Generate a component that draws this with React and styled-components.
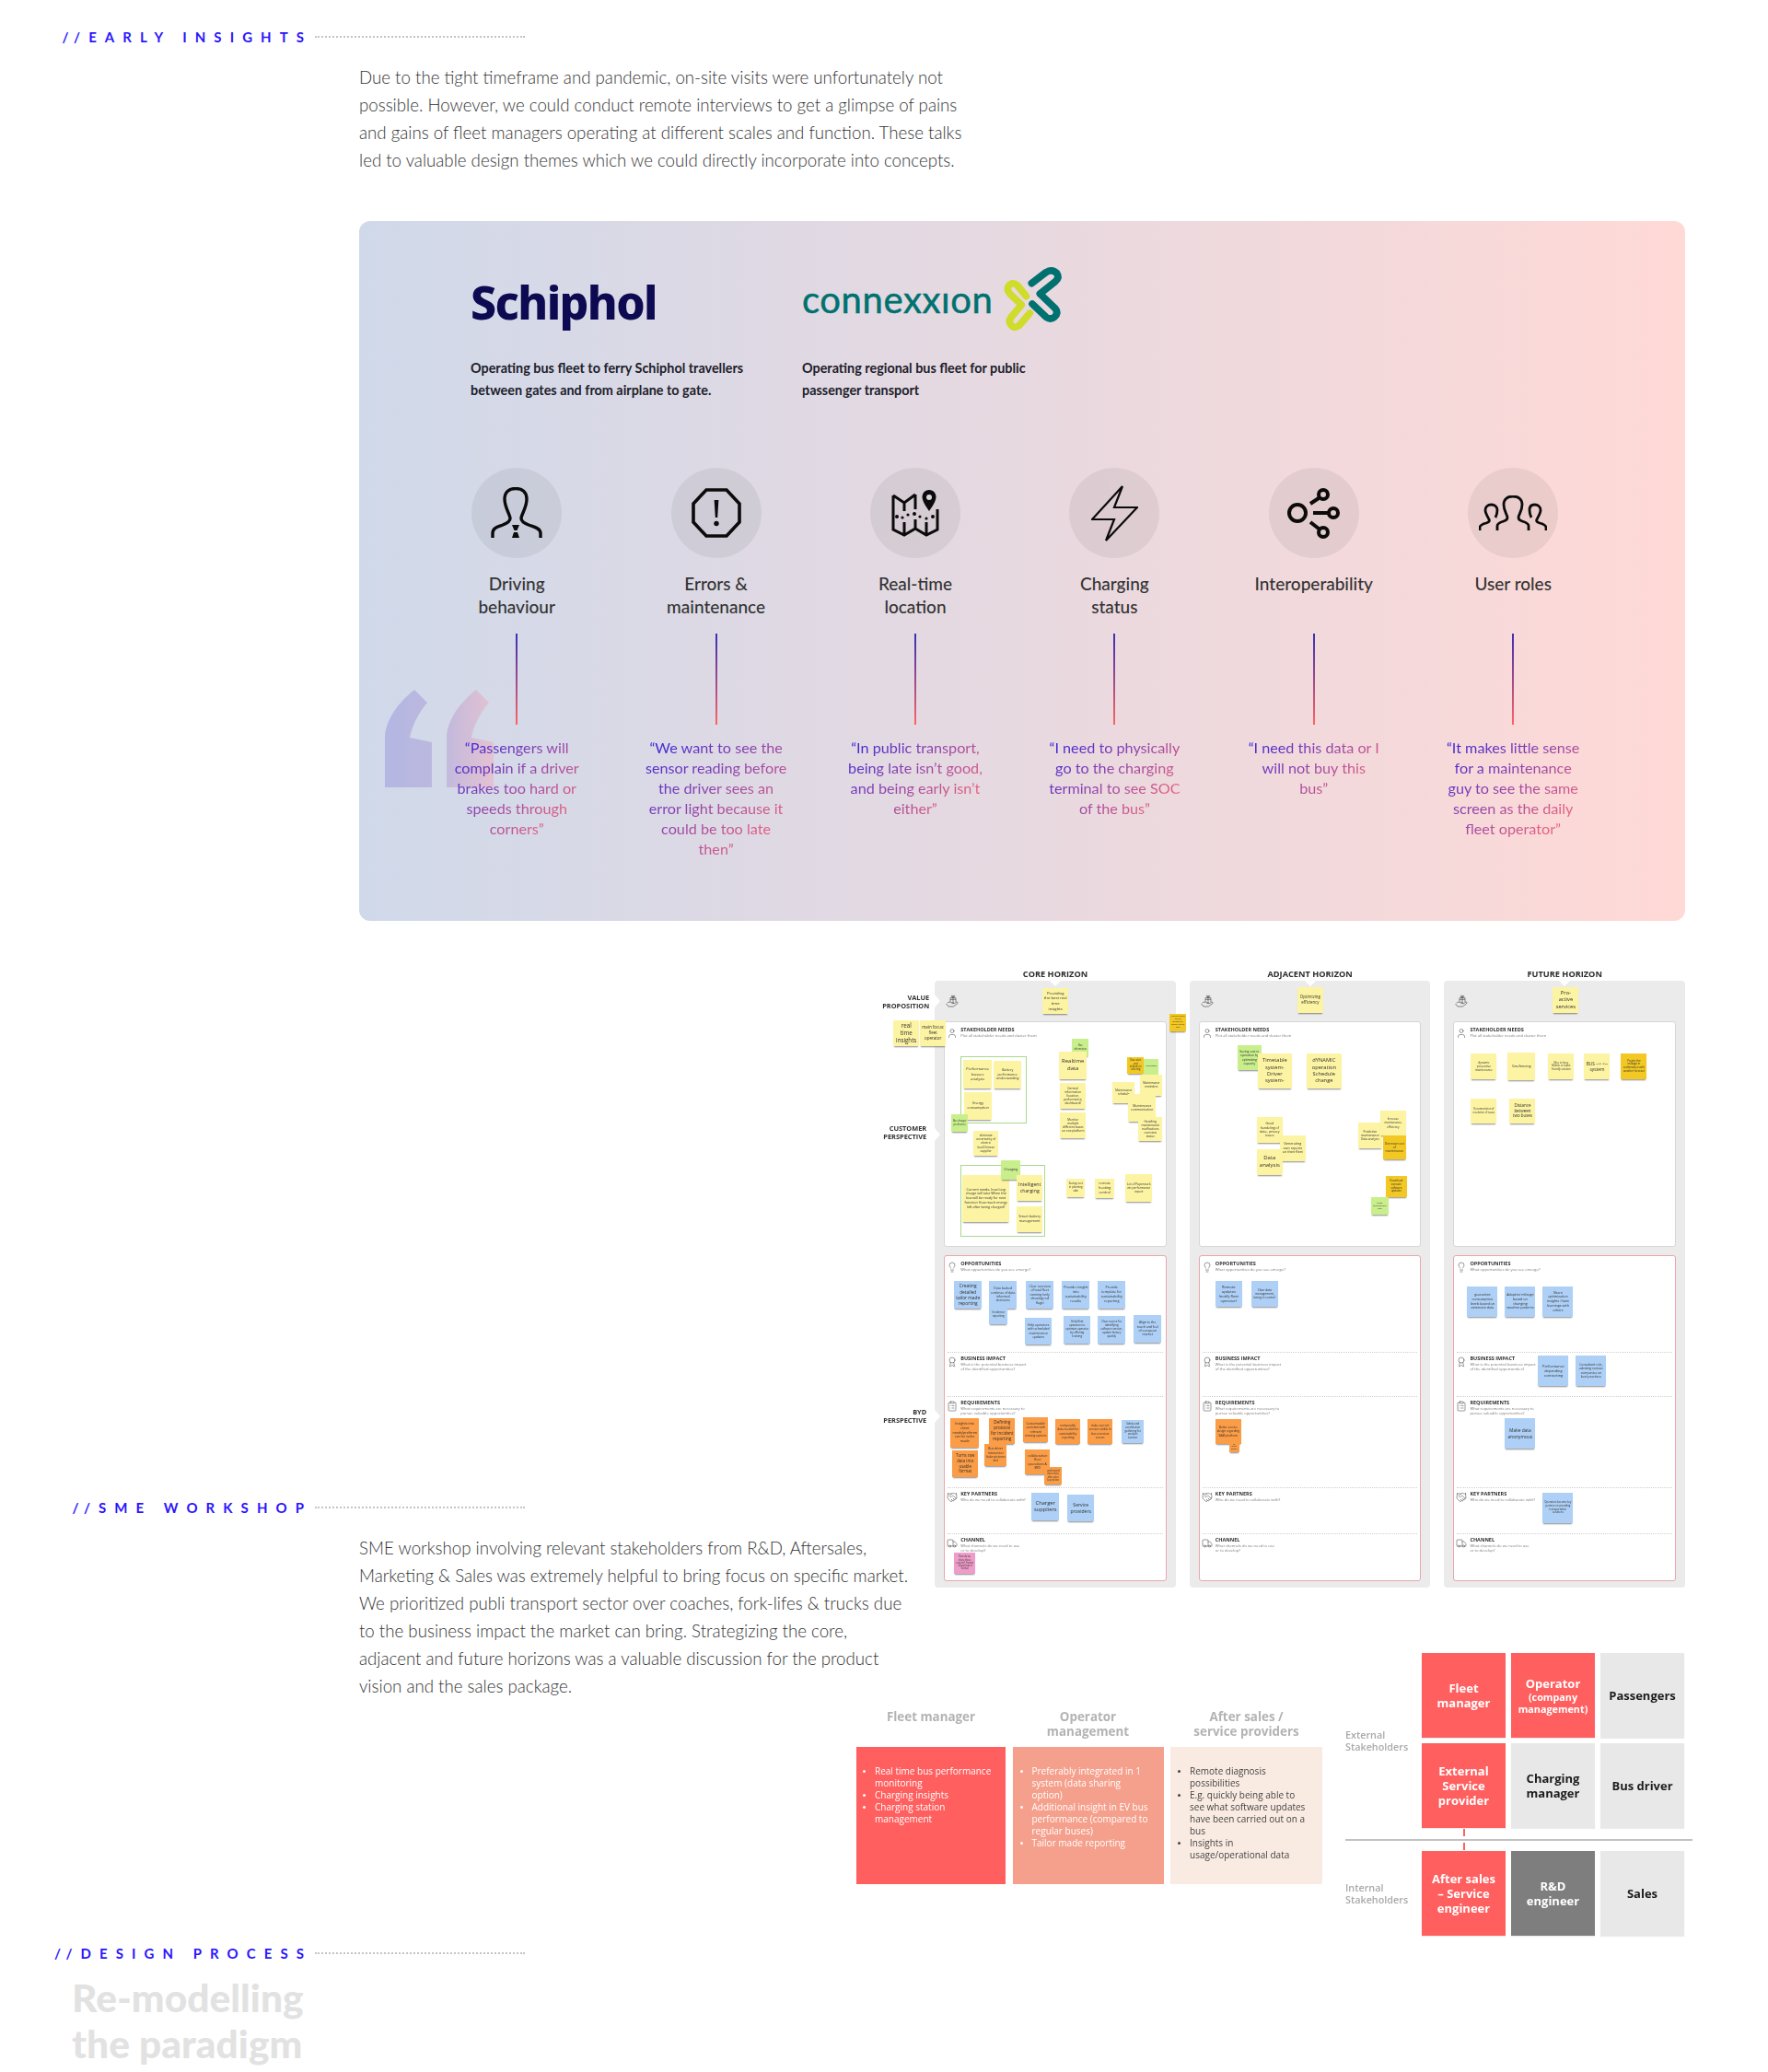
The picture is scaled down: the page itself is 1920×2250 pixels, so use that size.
import React from 'react'
import styled, { createGlobalStyle } from 'styled-components'
import { User, Lightbulb, Award, ClipboardList, Handshake, Truck } from 'lucide-react'

const GlobalStyle = createGlobalStyle`
  html, body { margin: 0; padding: 0; background: #fff; }
  body { font-family: "Lato", "Open Sans", sans-serif; }
`

const Page = styled.div`
  width: 1920px;
  height: 2250px;
  padding-top: 30px;
  box-sizing: border-box;
  overflow: hidden;
`

const SectionHead = styled.div`
  display: flex;
  align-items: center;
  height: 20px;
`
const SectionLabel = styled.div`
  width: 339px;
  text-align: right;
  font-size: 15px;
  font-weight: 700;
  letter-spacing: 9.05px;
  color: #2b14ff;
  white-space: nowrap;
`
const Dots = styled.div`
  width: 228px;
  margin-left: 3px;
  border-top: 2px dotted #c4c4c4;
`

const Paragraph = styled.p`
  margin: 19px 0 0 390px;
  width: 640px;
  font-size: 18.7px;
  font-weight: 300;
  line-height: 30px;
  color: #333;
  white-space: nowrap;
`

const Panel = styled.section`
  position: relative;
  margin: 51px 0 0 390px;
  width: 1440px;
  height: 760px;
  box-sizing: border-box;
  padding: 50px 0 0 63px;
  border-radius: 12px;
  background: linear-gradient(90deg, #d0d9ea 0%, #ffd9d6 100%);
`
const BigQuote = styled.div`
  position: absolute;
  left: 28px;
  top: 509px;
`
const Companies = styled.div`
  display: grid;
  grid-template-columns: 360px 360px;
  margin-left: 58px;
`
const Company = styled.div`
  display: flex;
  flex-direction: column;
`
const LogoRow = styled.div`
  display: flex;
  align-items: center;
  height: 70px;
  gap: 3px;
`
const SchipholLogo = styled.div`
  padding-top: 7px;
  font-family: "Noto Sans", sans-serif;
  font-size: 50px;
  font-weight: 800;
  letter-spacing: -1.6px;
  line-height: 63px;
  color: #0d0a52;
`
const ConnexxionLogo = styled.div`
  font-size: 40px;
  font-weight: 400;
  letter-spacing: 0.6px;
  line-height: 70px;
  color: #00716f;
  -webkit-text-stroke: 0.5px #00716f;
`
const CompanyText = styled.p`
  margin: 28px 0 0;
  font-size: 14.4px;
  font-weight: 700;
  line-height: 24px;
  color: #20202a;
  white-space: nowrap;
`
const Insights = styled.div`
  position: relative;
  display: grid;
  grid-template-columns: repeat(6, 216.4px);
  margin-top: 72px;
`
const Insight = styled.div`
  display: flex;
  flex-direction: column;
  align-items: center;
`
const Circle = styled.div`
  display: flex;
  align-items: center;
  justify-content: center;
  width: 98px;
  height: 98px;
  border-radius: 50%;
  background: rgba(0, 0, 0, 0.06);
  svg { display: block; }
`
const InsightTitle = styled.div`
  height: 50px;
  margin-top: 15px;
  font-size: 19px;
  font-weight: 500;
  line-height: 25px;
  color: #333;
  text-align: center;
  white-space: nowrap;
`
const Stem = styled.div`
  width: 2px;
  height: 99px;
  margin-top: 17px;
  background: linear-gradient(180deg, #3a2fb4 0%, #ff6464 100%);
`
const Quote = styled.div`
  margin-top: 14px;
  font-size: 16.2px;
  font-weight: 400;
  line-height: 22px;
  text-align: center;
  white-space: nowrap;
  color: transparent;
  background: linear-gradient(140deg, #3a26d8 5%, #ff6a72 95%);
  -webkit-background-clip: text;
  background-clip: text;
`

const Stage = styled.div`
  display: grid;
  width: 1838px;
  height: 1052px;
  margin-top: 50px;
  & > * { grid-area: 1 / 1; }
`
const TextBlock = styled.div`
  padding-top: 577px;
`
const BoardArea = styled.div`
  display: flex;
  justify-self: end;
  align-self: start;
  margin-right: 8px;
  filter: blur(0.35px);
`
const SideLabels = styled.div`
  display: flex;
  flex-direction: column;
  align-items: flex-end;
  width: 60px;
`
const SideLabel = styled.div`
  margin-top: ${p => p.$top}px;
  padding-right: ${p => p.$pad}px;
  font-family: "Open Sans", sans-serif;
  font-size: 7.4px;
  font-weight: 700;
  line-height: 9px;
  color: #333;
  text-align: right;
  white-space: nowrap;
`
const BoardColumns = styled.div`
  display: grid;
  grid-template-columns: repeat(3, 261.6px);
  column-gap: 15px;
`
const BoardColumn = styled.div`
  display: flex;
  flex-direction: column;
`
const BoardTitle = styled.div`
  height: 15px;
  font-family: "Open Sans", sans-serif;
  font-size: 9.2px;
  font-weight: 700;
  line-height: 15px;
  color: #2c2c2c;
  text-align: center;
`
const Board = styled.div`
  position: relative;
  height: 659px;
  box-sizing: border-box;
  padding: 0 10px;
  border-radius: 4px;
  background: #ebebeb;
  &::before {
    content: "";
    position: absolute;
    top: 0;
    left: 125px;
    border-left: 6px solid transparent;
    border-right: 6px solid transparent;
    border-top: 6px solid #fff;
  }
`
const LeftNotch = styled.div`
  position: absolute;
  left: 0;
  top: ${p => p.$y}px;
  border-top: 7px solid transparent;
  border-bottom: 7px solid transparent;
  border-left: 6px solid #fff;
`
const ValueRow = styled.div`
  display: flex;
  align-items: center;
  height: 44px;
  padding-left: 2px;
  color: #555;
`
const CardPanel = styled.div`
  height: ${p => p.$height}px;
  box-sizing: border-box;
  margin-bottom: 9px;
  padding: 0 3px;
  border: 1px solid ${p => (p.$pink ? '#e8a6ad' : '#d6d6d6')};
  border-radius: 3px;
  background: #fff;
`
const BoardSection = styled.div`
  height: ${p => p.$height}px;
  box-sizing: border-box;
  padding-top: ${p => p.$pad}px;
  border-top: ${p => (p.$first ? 'none' : '1px dotted #cfcfcf')};
`
const SectionRow = styled.div`
  display: flex;
  align-items: flex-start;
  gap: 3px;
  color: #555;
  svg { flex: none; width: 12px; height: 12px; margin: 1px 0 0 -1px; }
`
const SectionCopy = styled.div`
  font-family: "Open Sans", sans-serif;
`
const SectionName = styled.div`
  font-size: 5.5px;
  font-weight: 700;
  line-height: 7px;
  color: #2e2e2e;
  white-space: nowrap;
`
const SectionHint = styled.div`
  font-size: 4.1px;
  line-height: 5.2px;
  color: #777;
  white-space: nowrap;
`

const stickyColors = {
  y: '#fdf4a3',
  d: '#f3c823',
  g: '#c9ef8c',
  b: '#aed0f6',
  o: '#fb9c46',
  p: '#ee9cc8',
}
const Sticky = styled.div`
  position: absolute;
  left: ${p => p.$x}px;
  top: ${p => p.$y}px;
  width: ${p => p.$w}px;
  height: ${p => p.$h}px;
  box-sizing: border-box;
  display: flex;
  align-items: center;
  justify-content: center;
  padding: 1.5px;
  overflow-wrap: anywhere;
  font-family: "Open Sans", sans-serif;
  font-size: ${p => p.$fs}px;
  line-height: 1.3;
  color: #2e2e2e;
  text-align: center;
  background: ${p => stickyColors[p.$kind]};
  box-shadow: 0 2px 1.5px -1px rgba(0, 0, 0, 0.45);
`
const Frame = styled.div`
  position: absolute;
  left: ${p => p.$x}px;
  top: ${p => p.$y}px;
  width: ${p => p.$w}px;
  height: ${p => p.$h}px;
  box-sizing: border-box;
  border: 1px solid #a8d98b;
`

const BottomRow = styled.div`
  display: flex;
  justify-self: end;
  align-self: end;
  gap: 25px;
  filter: blur(0.3px);
`
const Needs = styled.div`
  display: grid;
  grid-template-columns: 162px 164px 165px;
  align-content: start;
  column-gap: 7.5px;
  margin-top: 61px;
  font-family: "Open Sans", sans-serif;
`
const NeedHead = styled.div`
  height: 41px;
  font-size: 13.4px;
  font-weight: 700;
  line-height: 16px;
  color: #b3b3b3;
  text-align: center;
`
const NeedBox = styled.ul`
  grid-row: 2;
  height: 149px;
  margin: 0;
  padding: 20px ${p => p.$right}px 0 ${p => p.$indent}px;
  box-sizing: border-box;
  font-size: 10px;
  font-weight: 500;
  line-height: 13px;
  color: ${p => (p.$dark ? '#444' : '#fff')};
  background: ${p => p.$bg};
  li::marker { font-size: 8px; }
`
const StakeMap = styled.div`
  display: flex;
  flex-direction: column;
  width: 377px;
  font-family: "Open Sans", sans-serif;
`
const StakeGroup = styled.div`
  display: grid;
  grid-template-columns: 77px repeat(3, 91px);
  grid-auto-rows: 92px;
  gap: 6px;
`
const StakeLabel = styled.div`
  grid-row: span ${p => p.$span};
  align-self: center;
  font-size: 10.8px;
  font-weight: 600;
  line-height: 13px;
  color: #a9a9a9;
`
const tones = {
  red: ['#ff5f5f', '#fff'],
  grey: ['#e8e8e8', '#1c1c1c'],
  dark: ['#7e7e7e', '#fff'],
}
const StakeCell = styled.div`
  display: flex;
  flex-direction: column;
  align-items: center;
  justify-content: center;
  font-size: 13px;
  font-weight: 700;
  line-height: 16px;
  text-align: center;
  background: ${p => tones[p.$tone][0]};
  color: ${p => tones[p.$tone][1]};
  box-shadow: 0 1px 1px rgba(0, 0, 0, 0.08);
  small { font-size: 10.8px; line-height: 13px; }
`
const StakeDivider = styled.div`
  position: relative;
  height: 25px;
  &::before {
    content: "";
    position: absolute;
    left: 0;
    right: 0;
    top: 12px;
    height: 2px;
    background: #c2c2c2;
  }
  &::after {
    content: "";
    position: absolute;
    left: 128px;
    top: 1px;
    width: 2px;
    height: 23px;
    background: linear-gradient(180deg, #ff5f5f 0 8px, transparent 8px 15px, #ff5f5f 15px);
  }
`

const ProcessHead = styled(SectionHead)`
  margin-top: 9px;
`
const ProcessTitle = styled.h2`
  margin: 13px 0 0 78px;
  font-size: 42.5px;
  font-weight: 900;
  line-height: 50px;
  color: #e2e2e2;
`

const PersonIcon = () => (
  <svg width="56" height="56" viewBox="0 0 56 56" fill="none" stroke="#0b0b0b" strokeWidth="3.4">
    <path d="M2 55V50C2 44 8 43 13 41C18 39 21 37 21 34C21 30 15 22 15 13C15 5 20 1.5 27 1.5C34 1.5 39 5 39 13C39 22 33 30 33 34C33 37 36 39 41 41C46 43 54 44 54 50V55" />
    <path d="M23 41H31L28.5 47H25.5ZM25 49H29L31 55H23Z" fill="#0b0b0b" stroke="none" />
  </svg>
)
const OctagonIcon = () => (
  <svg width="54" height="54" viewBox="0 0 54 54" fill="none" stroke="#0b0b0b" strokeWidth="3.6">
    <path d="M16 2H38L52 17V37L38 52H16L2 37V17Z" />
    <path d="M24.6 13H29.4L28.2 32H25.8Z" fill="#0b0b0b" stroke="none" />
    <circle cx="27" cy="38.5" r="2.7" fill="#0b0b0b" stroke="none" />
  </svg>
)
const MapIcon = () => (
  <svg width="52" height="52" viewBox="0 0 52 52" fill="none" stroke="#0b0b0b" strokeWidth="3">
    <path d="M2 7L14 15L26 6M2 7V44L14 50L26 43L38 50L50 44V22M14 15V24M14 36V50M26 6V22M26 33V43M38 36V50" />
    <path d="M41 1C36 1 33.5 5 33.5 9C33.5 14 41 24 41 24C41 24 48.5 14 48.5 9C48.5 5 46 1 41 1Z" fill="#0b0b0b" stroke="none" />
    <circle cx="41" cy="9" r="3" fill="#d9d5de" stroke="none" />
    <g fill="#0b0b0b" stroke="none">
      <circle cx="6" cy="30" r="2" />
      <circle cx="12" cy="31" r="1.6" />
      <circle cx="18" cy="28" r="1.6" />
      <circle cx="25" cy="27" r="2" />
      <circle cx="31" cy="30" r="1.6" />
      <circle cx="38" cy="32" r="1.6" />
      <circle cx="45" cy="30" r="2" />
    </g>
  </svg>
)
const BoltIcon = () => (
  <svg width="51" height="61" viewBox="-1 -1 51 61" fill="none" stroke="#0b0b0b" strokeWidth="2.2">
    <path d="M33 0L0 36H24L15 59L49 23H24Z" />
  </svg>
)
const ShareIcon = () => (
  <svg width="57" height="55" viewBox="0 0 57 55" fill="none" stroke="#0b0b0b" strokeWidth="4">
    <circle cx="11" cy="27" r="9" />
    <circle cx="39" cy="7" r="5" />
    <circle cx="50" cy="27" r="5" />
    <circle cx="39" cy="48" r="5" />
    <path d="M25 17L34 11M28 27H44M25 37L34 44" />
  </svg>
)
const UsersIcon = () => (
  <svg width="74" height="38" viewBox="0 0 74 38" fill="none" stroke="#0b0b0b" strokeWidth="2.8">
    <path d="M20 38V33C20 30 24 29 27 28C30 27 31 26 31 24C31 21 27 17 27 10C27 4 31 1 37 1C43 1 47 4 47 10C47 17 43 21 43 24C43 26 44 27 47 28C50 29 54 30 54 33V38" />
    <path d="M1 38V35C1 32 4 31 8 30C11 29 12 28 11 26C9 22 7 19 7 16C7 12 10 10 13.5 10C17 10 20 12 20 16C20 19 19 22 18 24" />
    <path d="M73 38V35C73 32 70 31 66 30C63 29 62 28 63 26C65 22 67 19 67 16C67 12 64 10 60.5 10C57 10 55 12 55 16C55 19 56 22 57 24" />
  </svg>
)
const GiftHandIcon = () => (
  <svg width="14" height="14" viewBox="0 0 14 14" fill="none" stroke="#555" strokeWidth="0.7">
    <path d="M0.5 10L3 13H8.5L13 9.4C13.5 8.4 12.6 7.8 11.6 8.3L9.4 9.6H6.4M1.6 9.2C3 7.8 5 7.9 6.4 8.6H8.3C9.2 8.6 9.2 9.6 8.3 9.6" />
    <path d="M5 3.6H11V8M5 3.6V7.8M8 1.8V8M5 5.4H11" />
    <path d="M8 3.4C6.6 3 5.8 1.6 6.6 1.1C7.4 0.7 8 2 8 3.4C8 2 8.6 0.7 9.4 1.1C10.2 1.6 9.4 3 8 3.4Z" />
  </svg>
)
const ConnexxionMark = () => (
  <svg width="80" height="80" viewBox="0 0 240 240" fill="none" strokeWidth="23" strokeLinecap="round" strokeLinejoin="round">
    <path d="M100 110L72 75Q55 60 42 78Q35 90 50 105L85 138L50 180Q40 195 55 208Q65 215 78 205L112 165" stroke="#cfdc2a" />
    <path d="M118 68L165 32Q185 20 200 35Q210 50 195 62L145 102L195 150Q207 165 192 178Q180 188 165 178L120 135" stroke="#00716f" />
  </svg>
)
const QuoteMark = () => (
  <svg width="120" height="108" viewBox="0 0 120 108">
    <defs>
      <linearGradient id="markFill" x1="0" y1="0" x2="1" y2="0">
        <stop offset="0" stopColor="#b3b7e2" />
        <stop offset="0.5" stopColor="#bdb8de" />
        <stop offset="1" stopColor="#e4c2d2" />
      </linearGradient>
    </defs>
    <path fill="url(#markFill)" d="M32 0L46 14C36 26 29 40 27 52L51 57V106H0V52C0 34 14 14 32 0ZM99 0L113 14C103 26 96 40 94 52L118 57V106H67V52C67 34 81 14 99 0Z" />
  </svg>
)

const insights = [
  { icon: <PersonIcon />, title: ['Driving', 'behaviour'], quote: ['“Passengers will', 'complain if a driver', 'brakes too hard or', 'speeds through', 'corners”'] },
  { icon: <OctagonIcon />, title: ['Errors &', 'maintenance'], quote: ['“We want to see the', 'sensor reading before', 'the driver sees an', 'error light because it', 'could be too late', 'then”'] },
  { icon: <MapIcon />, title: ['Real-time', 'location'], quote: ['“In public transport,', 'being late isn’t good,', 'and being early isn’t', 'either”'] },
  { icon: <BoltIcon />, title: ['Charging', 'status'], quote: ['“I need to physically', 'go to the charging', 'terminal to see SOC', 'of the bus”'] },
  { icon: <ShareIcon />, title: ['Interoperability'], quote: ['“I need this data or I', 'will not buy this', 'bus”'] },
  { icon: <UsersIcon />, title: ['User roles'], quote: ['“It makes little sense', 'for a maintenance', 'guy to see the same', 'screen as the daily', 'fleet operator”'] },
]

// kind, x, y, w, h, font size, text
const coreNotes = [
  ['y', 117, 8, 28, 28, 3.7, 'Providing the best real time insights'],
  ['y', -45, 43, 28, 28, 5.4, 'real time insights'],
  ['y', -16, 43, 28, 28, 3.9, 'main focus: fleet operator'],
  ['d', 255, 36, 18, 19, 1.9, 'Just the info to reduce monitoring, saving a lot of time'],
  ['y', 31, 86, 31, 31, 3.6, 'Performance busses analysis'],
  ['y', 64, 87, 30, 30, 3.1, 'Battery performance understanding'],
  ['y', 32, 121, 30, 30, 3.3, 'Energy consumption'],
  ['g', 18, 145, 18, 19, 2.3, 'Bus charger preference'],
  ['y', 42, 163, 27, 27, 2.8, 'eliminate uncertainty of electric bus/Chinese supplier'],
  ['g', 149, 63, 18, 19, 2.2, 'Bus information'],
  ['y', 135, 77, 30, 30, 5.2, 'Realtime data'],
  ['y', 136, 111, 28, 28, 2.8, 'General information (location, performance, dashboard)'],
  ['y', 136, 143, 28, 28, 2.8, 'Monitor multiple different buses on one platform'],
  ['d', 209, 83, 18, 18, 2.3, 'Data alert and defaults in ordering'],
  ['g', 227, 85, 16, 17, 1.8, 'Maintenance'],
  ['y', 223, 102, 24, 23, 2.6, 'Maintenance reminders'],
  ['y', 193, 110, 24, 23, 2.6, 'Maintenance schedule'],
  ['y', 210, 123, 30, 30, 2.9, 'Maintenance communication'],
  ['y', 221, 148, 26, 26, 2.8, 'Handling maintenance notifications overview status'],
  ['y', 30, 211, 51, 51, 3.2, 'Current needs- how long charge will take When the bus will be ready for next function How much energy left after being charged?'],
  ['g', 72, 195, 21, 21, 3.1, 'Charging'],
  ['y', 89, 211, 28, 28, 4.6, 'Intelligent charging'],
  ['y', 89, 245, 28, 28, 3.2, 'Smart battery management'],
  ['y', 143, 215, 20, 20, 2.5, 'Saving cost in planning side'],
  ['y', 174, 215, 21, 21, 3.3, 'remote heating control'],
  ['y', 207, 210, 29, 30, 2.8, 'Lot of Paperwork etc performance report'],
  ['b', 21, 326, 30, 30, 4.2, 'Creating detailed tailor made reporting'],
  ['b', 59, 326, 30, 30, 3, 'Data backed evidence of data informed decisions'],
  ['b', 59, 353, 20, 20, 2.6, 'Incidence reporting'],
  ['b', 99, 326, 30, 30, 3, 'Clear overview of total fleet running (only showing red flags)'],
  ['b', 138, 326, 30, 30, 3.3, 'Provide insight into sustainability results'],
  ['b', 177, 326, 30, 30, 3.3, 'Provide template for sustainability reporting'],
  ['b', 98, 366, 29, 29, 2.9, 'Help operators with scheduled maintenance updates'],
  ['b', 140, 364, 29, 30, 2.6, 'Help fleet operators to optimize operator by offering training'],
  ['b', 177, 364, 30, 30, 2.6, 'Clear source for identifying software version, update history quickly'],
  ['b', 216, 363, 30, 30, 3, 'Align to the touch and feel of european market'],
  ['o', 17, 475, 31, 32, 3.2, 'Insights into client needs/preferences for tailor made'],
  ['o', 59, 475, 28, 28, 4, 'Defining protocol for incident reporting'],
  ['o', 96, 474, 27, 27, 2.8, 'Customizable overview with relevant viewing options'],
  ['o', 131, 476, 27, 27, 2.7, 'comparable data needed for sustainability reporting'],
  ['o', 166, 476, 27, 27, 2.7, 'make current version visible in bus overview screen'],
  ['b', 203, 477, 24, 25, 2.5, 'Safety and acceleration gathering for analysis Lawson'],
  ['o', 19, 510, 28, 29, 3.8, 'Turns raw data into usable format'],
  ['o', 54, 503, 24, 24, 2.9, 'Bus driver interaction (take pictures etc)'],
  ['o', 98, 509, 27, 27, 3, 'collaboration fleet operations & BYD'],
  ['o', 119, 528, 19, 19, 2.2, 'understand interaction, after sales loop better'],
  ['b', 105, 556, 30, 30, 5, 'Charger suppliers'],
  ['b', 144, 558, 29, 29, 4.4, 'Service providers'],
  ['p', 21, 621, 23, 23, 2.2, 'How do we share these reports? Format + download in format'],
]
const adjacentNotes = [
  ['y', 117, 7, 28, 28, 3.8, 'Optimizing efficiency'],
  ['g', 52, 70, 26, 27, 2.9, 'Saving cost in operation by optimizing capacity'],
  ['y', 74, 79, 37, 38, 5, 'Timetable system-Driver system-'],
  ['y', 127, 79, 38, 38, 5, 'dYNAMIC operation Schedule change'],
  ['y', 73, 148, 28, 28, 3, 'Good handeling of data– privacy issues'],
  ['y', 98, 168, 28, 28, 3.2, 'Generating own reports on their fleet'],
  ['y', 73, 183, 28, 28, 5.2, 'Data analysis'],
  ['y', 183, 154, 26, 28, 2.8, 'Predictive maintenance Data analysis'],
  ['y', 207, 141, 28, 27, 2.7, 'Increase maintenance efficiency'],
  ['d', 210, 168, 25, 26, 2.8, 'Decrease cost of maintenance'],
  ['d', 213, 212, 23, 23, 2.6, 'Download execute software updates'],
  ['g', 197, 235, 19, 19, 2.1, 'Camp maintenance cost'],
  ['b', 28, 326, 29, 28, 3.5, 'Remote updates (notify fleet operator)'],
  ['b', 67, 326, 29, 28, 2.8, 'Clear data management, being in control'],
  ['o', 28, 476, 28, 27, 2.7, 'Better service design regarding SAAS platform'],
  ['o', 43, 501, 11, 11, 1.5, 'for service opening'],
]
const futureNotes = [
  ['y', 118, 7, 28, 28, 5, 'Pro-active services'],
  ['y', 29, 79, 28, 28, 2.7, 'dynamic preventive maintenance'],
  ['y', 69, 78, 30, 30, 3.4, 'Geofencing'],
  ['y', 113, 79, 28, 28, 2.4, 'Nice to have Mobile or tablet friendly solution'],
  ['y', 152, 79, 28, 28, 4.2, 'BUS --> <-- system'],
  ['d', 192, 79, 28, 28, 2.5, 'Project the mileage in combination with weather forecast'],
  ['y', 29, 128, 28, 27, 2.3, 'Documentation of resolution of issues'],
  ['y', 71, 128, 28, 27, 3.9, 'Distance between two buses'],
  ['b', 25, 332, 33, 33, 3.2, 'guarantee consumption levels based on extensive data'],
  ['b', 66, 332, 33, 33, 3.2, 'Adaptive mileage based on changing weather patterns'],
  ['b', 107, 332, 33, 33, 3.2, 'Share optimization insights / best learnings with others'],
  ['b', 102, 407, 33, 33, 3.4, 'Performance depending contracting'],
  ['b', 143, 407, 33, 33, 3, 'Consultant role, advising various companies on best practises'],
  ['b', 66, 475, 33, 33, 4.2, 'Make data anonymous'],
  ['b', 107, 556, 33, 33, 2.4, 'Operators become key partners in providing transportation solutions'],
]

const sections = [
  { height: 104, pad: 5, first: true, icon: Lightbulb, name: 'OPPORTUNITIES', hint: ['What opportunities do you see emerge?'] },
  { height: 48, pad: 3, icon: Award, name: 'BUSINESS IMPACT', hint: ['What is the potential business impact', 'of the identified opportunities?'] },
  { height: 99, pad: 3, icon: ClipboardList, name: 'REQUIREMENTS', hint: ['What requirements are necessary to', 'pursue valuable opportunities?'] },
  { height: 50, pad: 3, icon: Handshake, name: 'KEY PARTNERS', hint: ['Who do we need to collaborate with?'] },
  { height: 51, pad: 3, icon: Truck, name: 'CHANNEL', hint: ['What channels do we need to use', 'or to develop?'] },
]

const Lines = ({ items }) => items.map((line, i) => <React.Fragment key={i}>{line}{i < items.length - 1 && <br />}</React.Fragment>)

const SectionCell = ({ section }) => {
  const Icon = section.icon
  return (
    <SectionRow>
      <Icon strokeWidth={1.2} />
      <SectionCopy>
        <SectionName>{section.name}</SectionName>
        <SectionHint><Lines items={section.hint} /></SectionHint>
      </SectionCopy>
    </SectionRow>
  )
}

const Horizon = ({ title, notes, children }) => (
  <BoardColumn>
    <BoardTitle>{title}</BoardTitle>
    <Board>
      <ValueRow><GiftHandIcon /></ValueRow>
      <CardPanel $height={245}>
        <BoardSection $height={30} $pad={5} $first>
          <SectionCell section={{ icon: User, name: 'STAKEHOLDER NEEDS', hint: ['Plot all stakeholder needs and cluster them'] }} />
        </BoardSection>
      </CardPanel>
      <CardPanel $height={354} $pink>
        {sections.map(s => (
          <BoardSection key={s.name} $height={s.height} $pad={s.pad} $first={s.first}>
            <SectionCell section={s} />
          </BoardSection>
        ))}
      </CardPanel>
      {children}
      {notes.map(([kind, x, y, w, h, fs, text]) => (
        <Sticky key={text} $kind={kind} $x={x} $y={y} $w={w} $h={h} $fs={+(fs * 1.15).toFixed(2)}>{text}</Sticky>
      ))}
    </Board>
  </BoardColumn>
)

const App = () => {
  return (
    <Page>
      <GlobalStyle />
      <SectionHead>
        <SectionLabel>//EARLY INSIGHTS</SectionLabel>
        <Dots />
      </SectionHead>
      <Paragraph>
        Due to the tight timeframe and pandemic, on-site visits were unfortunately not<br />
        possible. However, we could conduct remote interviews to get a glimpse of pains<br />
        and gains of fleet managers operating at different scales and function. These talks<br />
        led to valuable design themes which we could directly incorporate into concepts.
      </Paragraph>

      <Panel>
        <BigQuote><QuoteMark /></BigQuote>
        <Companies>
          <Company>
            <LogoRow><SchipholLogo>Schiphol</SchipholLogo></LogoRow>
            <CompanyText>Operating bus fleet to ferry Schiphol travellers<br />between gates and from airplane to gate.</CompanyText>
          </Company>
          <Company>
            <LogoRow>
              <ConnexxionLogo>connexxıon</ConnexxionLogo>
              <ConnexxionMark />
            </LogoRow>
            <CompanyText>Operating regional bus fleet for public<br />passenger transport</CompanyText>
          </Company>
        </Companies>
        <Insights>
          {insights.map(item => (
            <Insight key={item.title[0]}>
              <Circle>{item.icon}</Circle>
              <InsightTitle><Lines items={item.title} /></InsightTitle>
              <Stem />
              <Quote><Lines items={item.quote} /></Quote>
            </Insight>
          ))}
        </Insights>
      </Panel>

      <Stage>
        <TextBlock>
          <SectionHead>
            <SectionLabel>//SME WORKSHOP</SectionLabel>
            <Dots />
          </SectionHead>
          <Paragraph>
            SME workshop involving relevant stakeholders from R&amp;D, Aftersales,<br />
            Marketing &amp; Sales was extremely helpful to bring focus on specific market.<br />
            We prioritized publi transport sector over coaches, fork-lifes &amp; trucks due<br />
            to the business impact the market can bring. Strategizing the core,<br />
            adjacent and future horizons was a valuable discussion for the product<br />
            vision and the sales package.
          </Paragraph>
        </TextBlock>

        <BoardArea>
          <SideLabels>
            <SideLabel $top={29} $pad={6}>VALUE<br />PROPOSITION</SideLabel>
            <SideLabel $top={124} $pad={9}>CUSTOMER<br />PERSPECTIVE</SideLabel>
            <SideLabel $top={290} $pad={9}>BYD<br />PERSPECTIVE</SideLabel>
          </SideLabels>
          <BoardColumns>
            <Horizon title="CORE HORIZON" notes={coreNotes}>
              <LeftNotch $y={15} />
              <LeftNotch $y={160} />
              <LeftNotch $y={466} />
              <Frame $x={28} $y={82} $w={72} $h={73} />
              <Frame $x={28} $y={200} $w={92} $h={78} />
            </Horizon>
            <Horizon title="ADJACENT HORIZON" notes={adjacentNotes} />
            <Horizon title="FUTURE HORIZON" notes={futureNotes} />
          </BoardColumns>
        </BoardArea>

        <BottomRow>
          <Needs>
            <NeedHead>Fleet manager</NeedHead>
            <NeedHead>Operator<br />management</NeedHead>
            <NeedHead>After sales /<br />service providers</NeedHead>
            <NeedBox $bg="#ff5f5f" $indent={20} $right={12}>
              <li>Real time bus performance monitoring</li>
              <li>Charging insights</li>
              <li>Charging station management</li>
            </NeedBox>
            <NeedBox $bg="#f5a08c" $indent={21} $right={12}>
              <li>Preferably integrated in 1 system (data sharing option)</li>
              <li>Additional insight in EV bus performance (compared to regular buses)</li>
              <li>Tailor made reporting</li>
            </NeedBox>
            <NeedBox $bg="#f9ebe2" $indent={21} $right={14} $dark>
              <li>Remote diagnosis possibilities</li>
              <li>E.g. quickly being able to see what software updates have been carried out on a bus</li>
              <li>Insights in usage/operational data</li>
            </NeedBox>
          </Needs>
          <StakeMap>
            <StakeGroup>
              <StakeLabel $span={2}>External<br />Stakeholders</StakeLabel>
              <StakeCell $tone="red">Fleet<br />manager</StakeCell>
              <StakeCell $tone="red">Operator<small>(company<br />management)</small></StakeCell>
              <StakeCell $tone="grey">Passengers</StakeCell>
              <StakeCell $tone="red">External<br />Service<br />provider</StakeCell>
              <StakeCell $tone="grey">Charging<br />manager</StakeCell>
              <StakeCell $tone="grey">Bus driver</StakeCell>
            </StakeGroup>
            <StakeDivider />
            <StakeGroup>
              <StakeLabel $span={1}>Internal<br />Stakeholders</StakeLabel>
              <StakeCell $tone="red">After sales<br />– Service<br />engineer</StakeCell>
              <StakeCell $tone="dark">R&amp;D<br />engineer</StakeCell>
              <StakeCell $tone="grey">Sales</StakeCell>
            </StakeGroup>
          </StakeMap>
        </BottomRow>
      </Stage>

      <ProcessHead>
        <SectionLabel>//DESIGN PROCESS</SectionLabel>
        <Dots />
      </ProcessHead>
      <ProcessTitle>Re-modelling<br />the paradigm</ProcessTitle>
    </Page>
  )
}

export default App
